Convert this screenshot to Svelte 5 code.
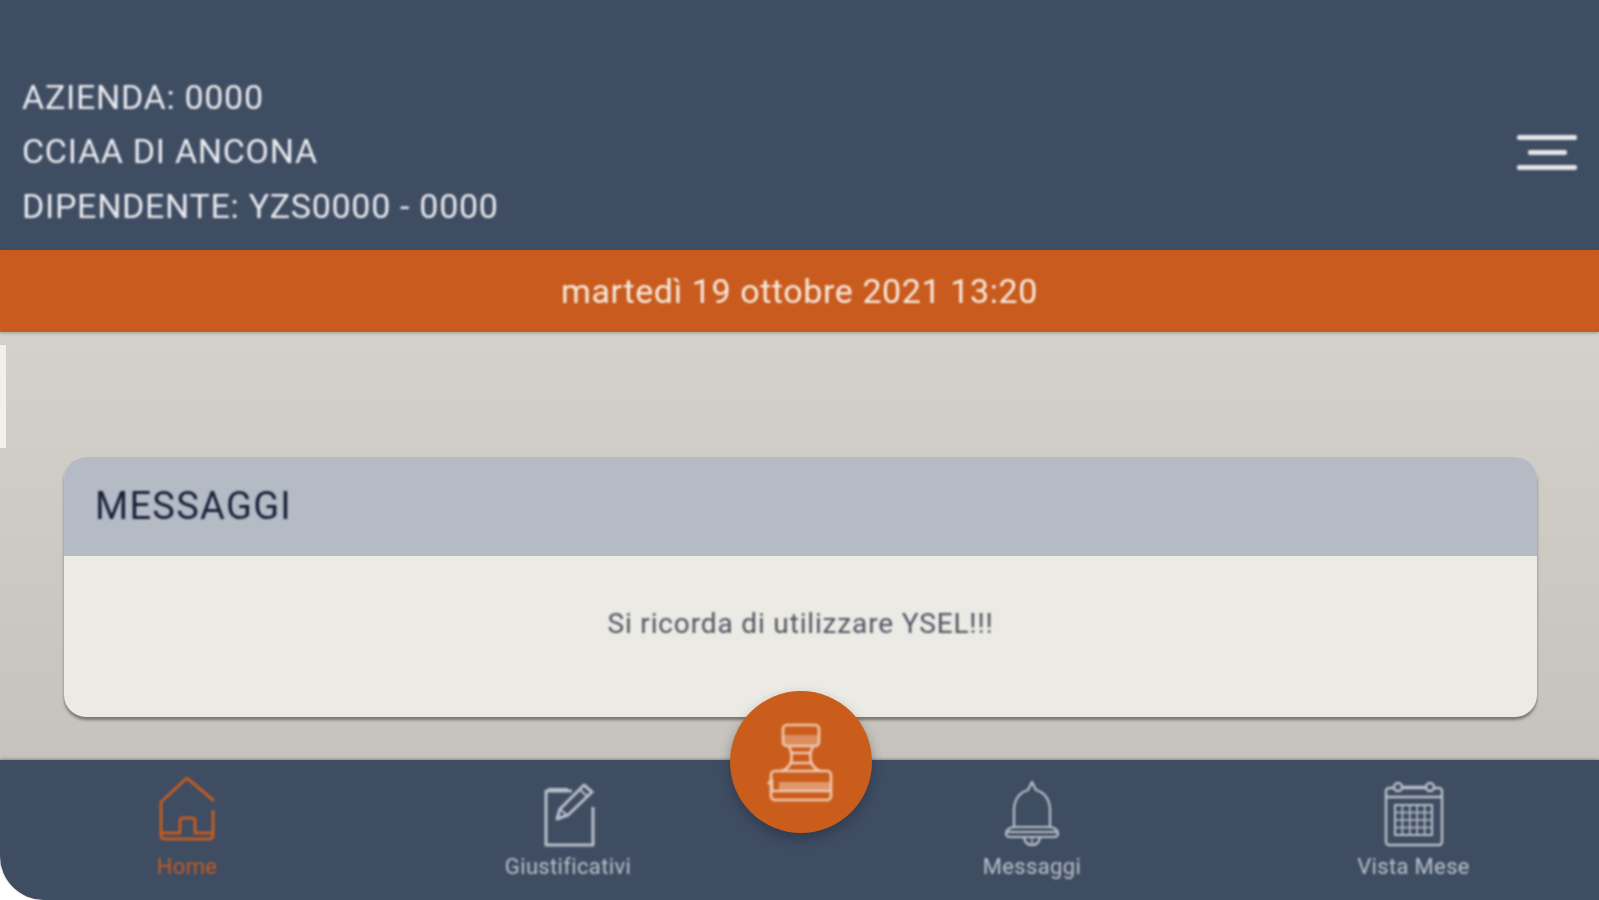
<script>
	let info = ["AZIENDA: 0000", "CCIAA DI ANCONA", "DIPENDENTE: YZS0000 - 0000"];
</script>

<div class="page">
	<header class="top">
		<div class="info soft">
			{#each info as line}
				<div>{line}</div>
			{/each}
		</div>
		<button class="burger soft" aria-label="menu">
			<span></span>
			<span class="short"></span>
			<span></span>
		</button>
	</header>

	<div class="date"><span class="soft">martedì 19 ottobre 2021 13:20</span></div>

	<main class="content">
		<i class="edge"></i>
		<section class="card">
			<h2><span class="soft">MESSAGGI</span></h2>
			<p class="soft">Si ricorda di utilizzare YSEL!!!</p>
		</section>
	</main>

	<nav class="bottom">
		<a class="item soft active" href="#home">
			<svg width="56" height="70" viewBox="0 0 56 70" fill="none" stroke="currentColor" stroke-width="3" stroke-linecap="round" stroke-linejoin="round">
				<path d="M54 23 28 1 2 25V58Q2 62 6 62H50Q54 62 54 58V34" />
				<path d="M2 56H21V44Q21 41 24 41H33Q36 41 36 44V56H54" />
			</svg>
			<span>Home</span>
		</a>
		<a class="item soft" href="#giustificativi">
			<svg width="56" height="70" viewBox="0 0 56 70" fill="none" stroke="currentColor" stroke-width="3" stroke-linejoin="round">
				<path d="M32 14H6V68H53V30" />
				<path d="M8 12H28" stroke-width="2" />
				<path d="M17 42 20 32 44 8 52 15 28 38Z" />
				<path d="M21 33 27 38M39 12 47 19" stroke-width="2" />
			</svg>
			<span>Giustificativi</span>
		</a>
		<div class="gap"></div>
		<a class="item soft" href="#messaggi">
			<svg width="56" height="70" viewBox="0 0 56 70" fill="none" stroke="currentColor" stroke-width="2.2" stroke-linejoin="round">
				<path d="M28 5 24 13Q11 17 10 32V50H46V32Q45 17 32 13Z" />
				<path d="M10 50Q3 51 2 56Q2 60 6 60H50Q54 60 54 56Q53 51 46 50" />
				<path d="M2 55H54" />
				<path d="M20 60Q21 68 28 68Q35 68 36 60" />
				<path d="M28 61V68" stroke-width="1.5" />
			</svg>
			<span>Messaggi</span>
		</a>
		<a class="item soft" href="#vista">
			<svg width="60" height="70" viewBox="0 0 60 70" fill="none" stroke="currentColor" stroke-width="2.4" stroke-linejoin="round">
				<rect x="2" y="11" width="56" height="57" rx="3" />
				<path d="M2 20H58" />
				<circle cx="14" cy="10" r="4" fill="#3f4d63" />
				<circle cx="46" cy="10" r="4" fill="#3f4d63" />
				<path d="M18 10H42" />
				<rect x="11" y="28" width="37" height="30" stroke-width="2" />
				<path d="M11 35.500H48M11 43H48M11 50.500H48M18.400 28V58M25.800 28V58M33.200 28V58M40.600 28V58" stroke-width="1.6" />
			</svg>
			<span>Vista Mese</span>
		</a>
		<button class="fab" aria-label="timbra">
			<svg class="soft" width="68" height="80" viewBox="0 0 68 80" fill="none" stroke="#efc8ae" stroke-width="2.6" stroke-linejoin="round">
				<rect x="16" y="3" width="36" height="21" rx="4" />
				<rect x="17" y="13" width="34" height="10" fill="#efc8ae" opacity=".45" stroke="none" />
				<path d="M22 24Q26 32 24 40 22 46 15 49M46 24Q42 32 44 40 46 46 53 49" />
				<path d="M25 31H43M24 41H44" />
				<rect x="4" y="49" width="60" height="29" rx="4" />
				<rect x="12" y="60" width="51" height="8" fill="#efc8ae" opacity=".55" stroke="none" />
				<path d="M4 69H64M1 62 5 58V68" />
			</svg>
		</button>
	</nav>
</div>

<style>
	:global(body) {
		background: #fff;
	}
	.page {
		width: 1599px;
		height: 900px;
		display: flex;
		flex-direction: column;
		font-family: Roboto, "Liberation Sans", sans-serif;
		overflow: hidden;
	}
	/* the reference is an upscaled capture, everything on it is a bit out of focus */
	.soft {
		filter: blur(0.8px);
	}
	.top {
		height: 250px;
		box-sizing: border-box;
		background: #3f4d63;
		display: flex;
		align-items: flex-end;
		justify-content: space-between;
		padding: 0 22px 17px;
		color: #e8eaee;
	}
	.info {
		font-size: 34px;
		line-height: 54.5px;
		letter-spacing: 0.7px;
	}
	.burger {
		width: 60px;
		height: 35px;
		margin-bottom: 63px;
		padding: 0;
		border: 0;
		background: none;
		display: flex;
		flex-direction: column;
		align-items: center;
		justify-content: space-between;
	}
	.burger span {
		display: block;
		width: 100%;
		height: 5px;
		border-radius: 2px;
		background: #e4e5ea;
	}
	.burger .short {
		width: 65%;
	}
	.date {
		height: 82px;
		background: #c85b1d;
		color: #f8eadf;
		font-size: 34px;
		line-height: 82px;
		letter-spacing: 0.6px;
		text-align: center;
		box-shadow: 0 1px 3px rgba(60, 50, 40, 0.35);
		z-index: 1;
	}
	.date span {
		display: block;
	}
	.content {
		flex: 1;
		position: relative;
		box-sizing: border-box;
		padding: 125px 62px 0 64px;
		background: linear-gradient(#d3d1ca, #c6c3bd);
	}
	.edge {
		position: absolute;
		left: 0;
		top: 13px;
		width: 6px;
		height: 103px;
		background: #f1f0ea;
	}
	.card {
		height: 260px;
		border-radius: 22px;
		background: #eceae4;
		box-shadow: 0 3px 3px rgba(90, 85, 78, 0.7);
		overflow: hidden;
	}
	.card h2 {
		margin: 0;
		height: 99px;
		box-sizing: border-box;
		padding-left: 31px;
		background: #b4bbc5;
		color: #1b2038;
		font-size: 38px;
		font-weight: 400;
		letter-spacing: 1.3px;
		line-height: 99px;
	}
	.card h2 span {
		display: block;
	}
	.card p {
		margin: 0;
		text-align: center;
		padding-top: 50px;
		color: #4f5462;
		font-size: 28px;
		letter-spacing: 0.85px;
		line-height: 36px;
	}
	.bottom {
		position: relative;
		height: 140px;
		background: #3f4d63;
		border-bottom-left-radius: 44px;
		display: grid;
		grid-template-columns: 374px 388px 76px 388px 375px;
		box-shadow: 0 -1px 3px rgba(60, 55, 50, 0.4);
	}
	.item {
		display: flex;
		flex-direction: column;
		align-items: center;
		padding-top: 17px;
		color: #b9c0c9;
		font-size: 22px;
		letter-spacing: 0.35px;
		text-decoration: none;
	}
	.item span {
		margin-top: 7px;
		line-height: 26px;
	}
	.item.active {
		color: #c25c22;
	}
	.fab {
		position: absolute;
		left: 730px;
		top: -69px;
		width: 142px;
		height: 142px;
		padding: 0;
		border: 0;
		border-radius: 50%;
		background: #cb5d1c;
		box-shadow: 0 6px 12px rgba(30, 35, 45, 0.4);
		display: flex;
		align-items: center;
		justify-content: center;
	}
</style>
